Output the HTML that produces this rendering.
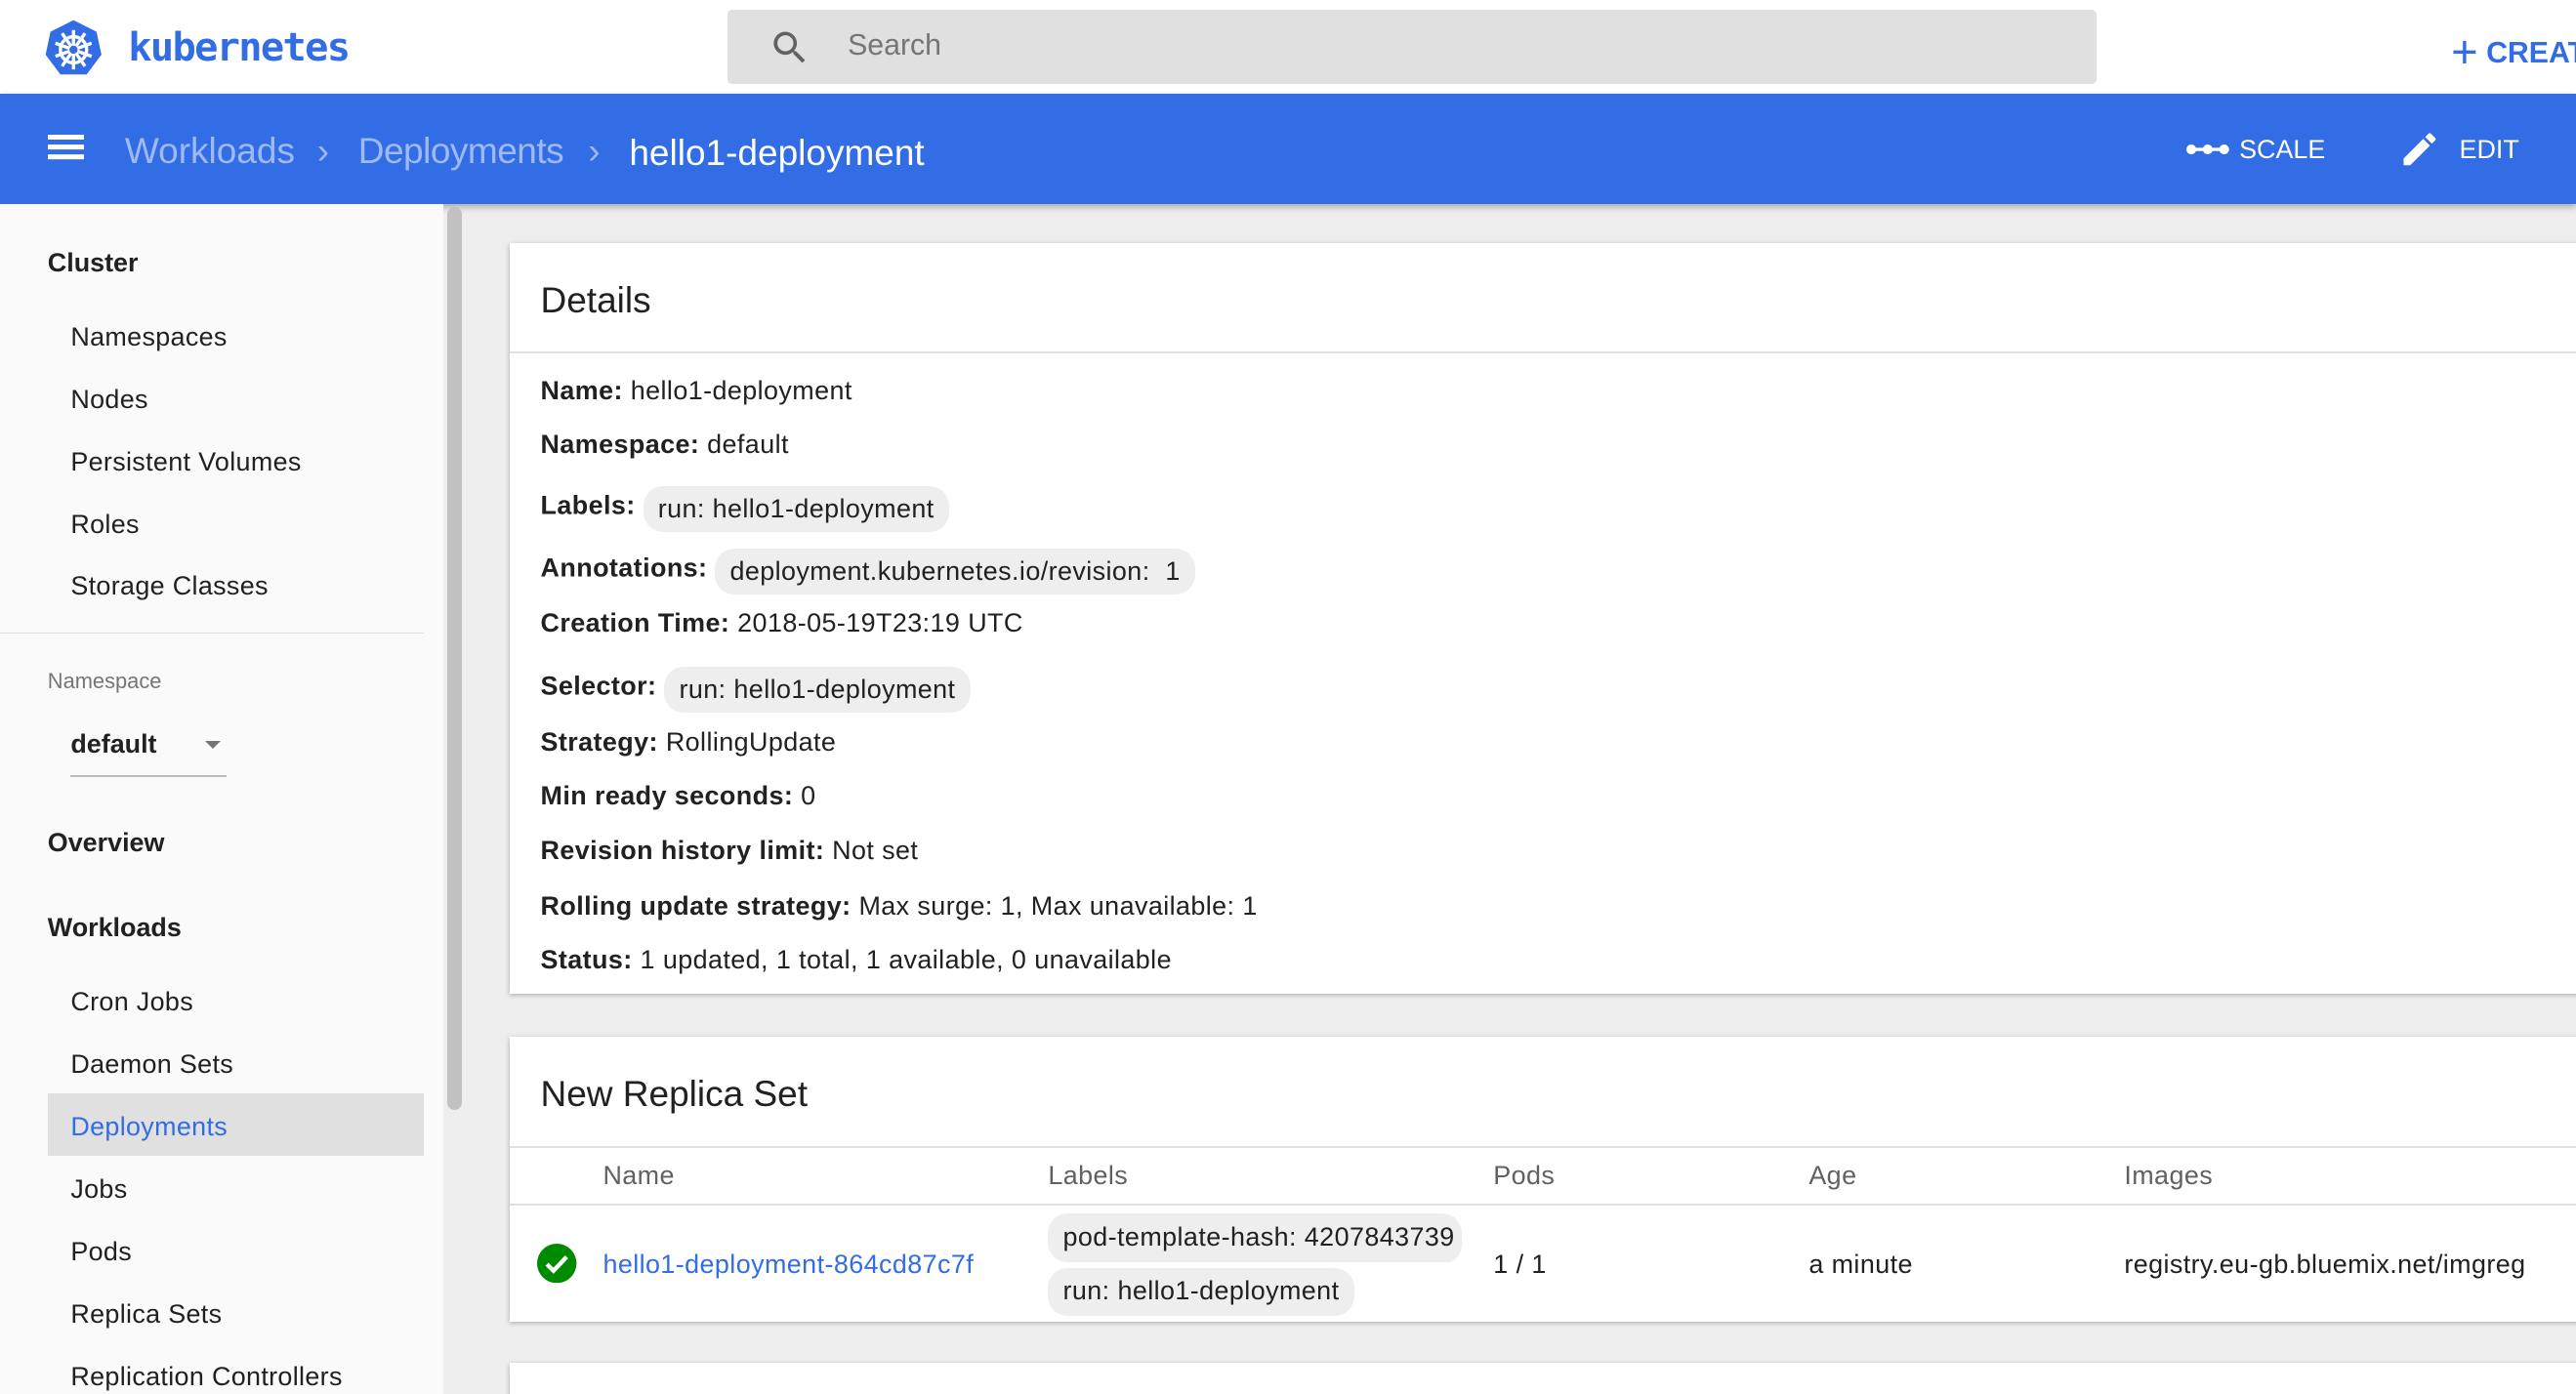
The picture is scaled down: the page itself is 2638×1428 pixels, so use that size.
<!DOCTYPE html>
<html style="overflow:hidden"><head><meta charset="utf-8"><style>
html,body{margin:0;padding:0;}
body{width:1568px;height:849px;zoom:1.68240;overflow:hidden;position:relative;background:#eeeeee;font-family:"Liberation Sans",Arial,sans-serif;color:#212121;}
.a{position:absolute;white-space:nowrap;}
.top{left:0;top:0;width:1568px;height:57px;background:#fff;}
.bar{left:0;top:57px;width:1568px;height:67px;background:#326de6;box-shadow:0 2px 4px rgba(0,0,0,.3);}
.side{left:0;top:124px;width:270px;height:725px;background:#fafafa;}
.sb{left:272px;top:126px;width:9px;height:550px;background:#c1c1c1;border-radius:5px;}
.card{background:#fff;box-shadow:0 1px 3px rgba(0,0,0,.3);}
.chip{background:#eeeeee;border-radius:12px;padding:4px 9px;display:inline-block;}
b{font-weight:bold;}
.nav{font-size:16px;left:43px;color:#212121;letter-spacing:.2px}
.ls{letter-spacing:.25px}
</style></head><body>
<div class="a top"></div>
<svg class="a" style="left:27px;top:11px" width="36" height="36" viewBox="0 0 36 36"><polygon points="18,1 32,8 35,22 26,34 10,34 1,22 4,8" fill="#326de6"/><g stroke="#fff" stroke-width="2" fill="none"><circle cx="18" cy="19" r="8"/><path d="M18 7v24M7 15l22 8M7 23l22-8M11 9l14 20M25 9L11 29"/></g><circle cx="18" cy="19" r="2.5" fill="#326de6"/></svg>
<div class="a" style="left:78px;top:15px;font-size:24px;color:#326de6;font-family:'DejaVu Sans Mono','Liberation Mono',monospace;font-weight:bold;letter-spacing:-1px">kubernetes</div>
<div class="a" style="left:443px;top:6px;width:833px;height:45px;background:#e0e0e0;border-radius:3px"></div>
<svg class="a" style="left:468px;top:16px" width="26" height="26" viewBox="0 0 24 24"><path fill="#616161" d="M15.5 14h-.8l-.3-.3A6.5 6.5 0 1 0 9.5 16a6.5 6.5 0 0 0 4.2-1.6l.3.3v.8l5 5 1.5-1.5-5-5zm-6 0a4.5 4.5 0 1 1 0-9 4.5 4.5 0 0 1 0 9z"/></svg>
<div class="a" style="left:516px;top:18px;font-size:18px;color:#757575">Search</div>
<div class="a" style="left:1492px;top:12px;font-size:18px;color:#326de6;font-weight:bold"><span style="font-size:28px;font-weight:normal;position:relative;top:3px">+</span> CREATE</div>

<div class="a bar"></div>
<div class="a" style="left:29px;top:82px;width:22px;height:3px;background:#fff;box-shadow:0 6px 0 #fff,0 12px 0 #fff"></div>
<div class="a" style="left:76px;top:79px;font-size:22px;color:#9fbaf3">Workloads</div>
<div class="a" style="left:193px;top:79px;font-size:22px;color:#9fbaf3">›</div>
<div class="a" style="left:218px;top:79px;font-size:22px;color:#9fbaf3;letter-spacing:-.3px">Deployments</div>
<div class="a" style="left:358px;top:79px;font-size:22px;color:#9fbaf3">›</div>
<div class="a" style="left:383px;top:80px;font-size:22px;color:#fff">hello1-deployment</div>
<svg class="a" style="left:1331px;top:85px" width="26" height="12"><line x1="3" y1="6" x2="23" y2="6" stroke="#fff" stroke-width="2"/><circle cx="3" cy="6" r="3" fill="#fff"/><circle cx="13" cy="6" r="3" fill="#fff"/><circle cx="23" cy="6" r="3" fill="#fff"/></svg>
<div class="a" style="left:1363px;top:82px;font-size:16px;color:#fff">SCALE</div>
<svg class="a" style="left:1460px;top:78px" width="26" height="26" viewBox="0 0 24 24"><path fill="#fff" d="M3 17.25V21h3.75L17.8 9.94l-3.75-3.75L3 17.25zM20.7 7.04a1 1 0 0 0 0-1.41l-2.34-2.34a1 1 0 0 0-1.41 0l-1.83 1.83 3.75 3.75 1.83-1.83z"/></svg>
<div class="a" style="left:1497px;top:82px;font-size:16px;color:#fff">EDIT</div>

<div class="a side"></div>
<div class="a sb"></div>
<div class="a" style="left:29px;top:151px;font-size:16px;font-weight:bold">Cluster</div>
<div class="a nav" style="top:196px">Namespaces</div>
<div class="a nav" style="top:234px">Nodes</div>
<div class="a nav" style="top:272px">Persistent Volumes</div>
<div class="a nav" style="top:310px">Roles</div>
<div class="a nav" style="top:348px">Storage Classes</div>
<div class="a" style="left:0;top:385px;width:258px;height:1px;background:#ddd"></div>
<div class="a" style="left:29px;top:407px;font-size:13px;color:#757575">Namespace</div>
<div class="a" style="left:43px;top:444px;font-size:16px;font-weight:bold">default</div>
<div class="a" style="left:125px;top:451px;width:0;height:0;border-left:5px solid transparent;border-right:5px solid transparent;border-top:5px solid #757575"></div>
<div class="a" style="left:43px;top:472px;width:95px;height:1px;background:#bbb"></div>
<div class="a" style="left:29px;top:504px;font-size:16px;font-weight:bold">Overview</div>
<div class="a" style="left:29px;top:556px;font-size:16px;font-weight:bold">Workloads</div>
<div class="a nav" style="top:601px">Cron Jobs</div>
<div class="a nav" style="top:639px">Daemon Sets</div>
<div class="a" style="left:29px;top:666px;width:229px;height:38px;background:#e0e0e0"></div>
<div class="a nav" style="top:677px;color:#326de6">Deployments</div>
<div class="a nav" style="top:715px">Jobs</div>
<div class="a nav" style="top:753px">Pods</div>
<div class="a nav" style="top:791px">Replica Sets</div>
<div class="a nav" style="top:829px">Replication Controllers</div>

<div class="a card" style="left:310px;top:148px;width:1270px;height:457px"></div>
<div class="a" style="left:329px;top:170px;font-size:22px">Details</div>
<div class="a" style="left:310px;top:214px;width:1258px;height:1px;background:#e0e0e0"></div>
<div class="a ls" style="left:329px;top:228px;font-size:16px;line-height:20px">
<div style="position:absolute;top:0"><b>Name:</b> hello1-deployment</div>
<div style="position:absolute;top:33px"><b>Namespace:</b> default</div>
<div style="position:absolute;top:66px"><b>Labels:</b> <span class="chip" style="position:relative;top:2px">run: hello1-deployment</span></div>
<div style="position:absolute;top:104px"><b>Annotations:</b> <span class="chip" style="position:relative;top:2px">deployment.kubernetes.io/revision: &nbsp;1</span></div>
<div style="position:absolute;top:142px"><b>Creation Time:</b> 2018-05-19T23:19 UTC</div>
<div style="position:absolute;top:176px"><b>Selector:</b> <span class="chip" style="position:relative;top:2px">run: hello1-deployment</span></div>
<div style="position:absolute;top:214px"><b>Strategy:</b> RollingUpdate</div>
<div style="position:absolute;top:247px"><b>Min ready seconds:</b> 0</div>
<div style="position:absolute;top:280px"><b>Revision history limit:</b> Not set</div>
<div style="position:absolute;top:314px"><b>Rolling update strategy:</b> Max surge: 1, Max unavailable: 1</div>
<div style="position:absolute;top:347px"><b>Status:</b> 1 updated, 1 total, 1 available, 0 unavailable</div>
</div>

<div class="a card" style="left:310px;top:631px;width:1270px;height:174px"></div>
<div class="a" style="left:329px;top:653px;font-size:22px">New Replica Set</div>
<div class="a" style="left:310px;top:698px;width:1258px;height:1px;background:#e0e0e0"></div>
<div class="a" style="left:310px;top:733px;width:1258px;height:1px;background:#e0e0e0"></div>
<div class="a ls" style="top:707px;left:0;font-size:16px;color:#616161"><span class="a" style="left:367px">Name</span><span class="a" style="left:638px">Labels</span><span class="a" style="left:909px">Pods</span><span class="a" style="left:1101px">Age</span><span class="a" style="left:1293px">Images</span></div>
<svg class="a" style="left:327px;top:757px" width="24" height="24" viewBox="0 0 24 24"><circle cx="12" cy="12" r="12" fill="#008a00"/><path d="M6 12.5l4 4 8-8.5" stroke="#fff" stroke-width="2.6" fill="none"/></svg>
<div class="a ls" style="left:367px;top:761px;font-size:16px;color:#326de6">hello1-deployment-864cd87c7f</div>
<div class="a ls" style="left:638px;top:739px;width:252px;height:31px;overflow:hidden;border-radius:12px;font-size:16px"><span class="chip" style="padding:5px 9px 6px;width:300px">pod-template-hash: 4207843739</span></div>
<div class="a ls" style="left:638px;top:772px;font-size:16px"><span class="chip" style="padding:5px 9px 6px">run: hello1-deployment</span></div>
<div class="a ls" style="left:909px;top:761px;font-size:16px">1 / 1</div>
<div class="a ls" style="left:1101px;top:761px;font-size:16px">a minute</div>
<div class="a ls" style="left:1293px;top:761px;font-size:16px;width:253px;overflow:hidden">registry.eu-gb.bluemix.net/imgreg</div>

<div class="a card" style="left:310px;top:830px;width:1270px;height:40px"></div>
</body></html>
